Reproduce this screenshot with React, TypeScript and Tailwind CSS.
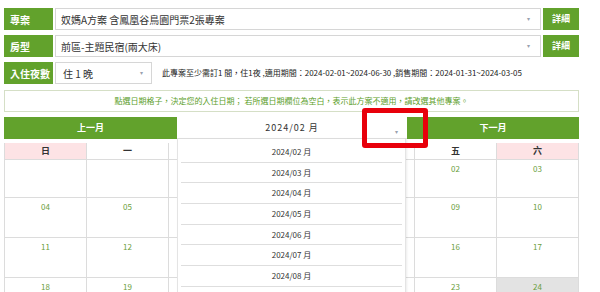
import React from "react";

const green = "bg-[#62a22c]";

const months = [
  "2024/02 月",
  "2024/03 月",
  "2024/04 月",
  "2024/05 月",
  "2024/06 月",
  "2024/07 月",
  "2024/08 月",
  "2024/09 月",
  "2024/10 月",
];
const weekdays = ["日", "一", "二", "三", "四", "五", "六"];

// Feb 2024 starts on Thursday
const weeks: (string | null)[][] = [
  [null, null, null, null, "01", "02", "03"],
  ["04", "05", "06", "07", "08", "09", "10"],
  ["11", "12", "13", "14", "15", "16", "17"],
  ["18", "19", "20", "21", "22", "23", "24"],
];

const Caret = () => <span className="text-[6px] text-gray-400 leading-none">▾</span>;

const FieldRow = ({ label, value, detail }: { label: string; value: string; detail?: boolean }) => (
  <div className="flex h-[22px]">
    <div className={`${green} w-[49px] flex items-center pl-[6px] text-white text-[10px] font-bold`}>{label}</div>
    <div className="flex-1 ml-[2px] flex items-center justify-between border border-[#d6d6d6] bg-white pl-[5px] pr-[10px] text-[10px] text-[#333]">
      <span>{value}</span>
      <Caret />
    </div>
    {detail && (
      <div className={`${green} w-[36px] ml-[2px] flex items-center justify-center text-white text-[9px] font-bold`}>詳細</div>
    )}
  </div>
);

export default function App() {
  return (
    <div className="relative w-[600px] h-[292px] overflow-hidden bg-white px-[4px] pt-[8px] font-['Noto_Sans_CJK_TC',sans-serif]">
      <div className="w-[575px] flex flex-col gap-[5px]">
        <FieldRow label="專案" value="奴媽A方案 含鳳凰谷鳥園門票2張專案" detail />
        <FieldRow label="房型" value="前區-主題民宿(兩大床)" detail />
        <div className="flex h-[22px] items-center">
          <div className={`${green} w-[49px] h-full flex items-center pl-[6px] text-white text-[10px] font-bold`}>入住夜數</div>
          <div className="w-[97px] h-full ml-[2px] flex items-center justify-between border border-[#d6d6d6] bg-white pl-[7px] pr-[8px] text-[10px] text-[#333]">
            <span>住 1 晚</span>
            <Caret />
          </div>
          <div className="ml-[10px] text-[8px] text-[#222]">
            此專案至少需訂1 間，住1夜 ,適用期間：2024-02-01~2024-06-30 ,銷售期間：2024-01-31~2024-03-05
          </div>
        </div>
        <div className="mt-[1px] h-[22px] border border-[#d5dfc6] flex items-center justify-center text-[8px] text-[#5c9e2a]">
          點選日期格子，決定您的入住日期； 若所選日期欄位為空白，表示此方案不適用，請改選其他專案。
        </div>
        <div className="flex h-[22px]">
          <div className={`${green} w-[173px] flex items-center justify-center text-white text-[9px] font-bold`}>上一月</div>
          <div className="w-[230px] flex items-center justify-center relative border-b border-[#e2e2e2] text-[9px] text-[#333] tracking-[1px]">
            2024/02 月
            <span className="absolute right-[8px] top-[7px]"><Caret /></span>
          </div>
          <div className={`${green} flex-1 flex items-center justify-center text-white text-[9px] font-bold`}>下一月</div>
        </div>
        <div className="-mt-[1px] border-l border-[#dcdcdc]">
          <div className="grid grid-cols-7 h-[17px]">
            {weekdays.map((d, i) => (
              <div
                key={d}
                className={`flex items-center justify-center text-[9px] font-bold text-[#333] border-r border-b border-[#dcdcdc] ${i === 0 || i === 6 ? "bg-[#fde3e5]" : "bg-white"}`}
              >
                {d}
              </div>
            ))}
          </div>
          {weeks.map((w, wi) => (
            <div key={wi} className={`grid grid-cols-7 ${wi === 0 ? "h-[38px]" : "h-[40px]"}`}>
              {w.map((d, di) => (
                <div
                  key={di}
                  className={`border-r border-b border-[#dcdcdc] flex justify-center pt-[3px] text-[8px] text-[#6a9e3c] ${d === "24" ? "bg-[#e3e3e3]" : "bg-white"}`}
                >
                  {d}
                </div>
              ))}
            </div>
          ))}
        </div>
      </div>

      {/* open month dropdown */}
      <div className="absolute left-[177px] top-[139px] w-[229px] bg-white border-r border-l border-[#e4e4e4] shadow-[1px_0_2px_rgba(0,0,0,0.08)] px-[3px] pt-[3px]">
        {months.map((m) => (
          <div key={m} className="h-[20.7px] flex items-center justify-center border-b border-[#dedede] text-[8px] text-[#333]">
            {m}
          </div>
        ))}
      </div>

      {/* red highlight box */}
      <div className="absolute left-[362px] top-[108px] w-[66px] h-[40px] border-[5px] border-[#e8000b] rounded-[3px]" />
    </div>
  );
}
